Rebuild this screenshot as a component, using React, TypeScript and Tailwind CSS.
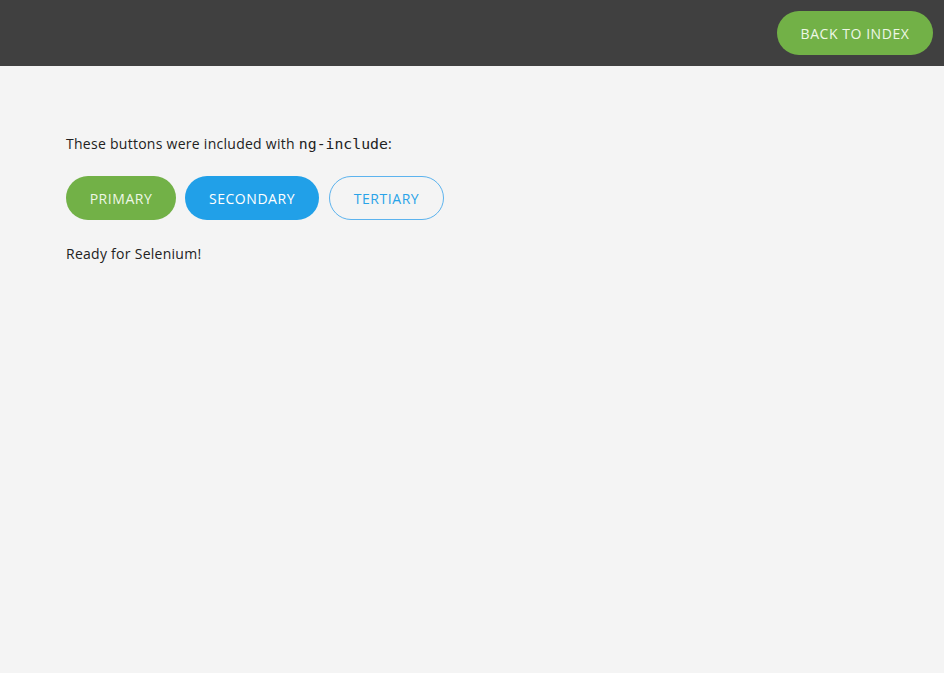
import React from 'react';

const font = { fontFamily: '"Open Sans", "Noto Sans", sans-serif' };

export default function App() {
  return (
    <div className="flex h-[673px] w-[944px] flex-col bg-[#f4f4f4] text-[14px] text-[#222]" style={font}>
      <header className="flex h-[66px] shrink-0 items-start justify-end bg-[#404040] pr-[11px] pt-[11px]">
        <button className="h-[44px] w-[156px] rounded-full bg-[#72b147] text-[14px] uppercase tracking-[0.55px] text-[#eef7e6]">
          Back to index
        </button>
      </header>

      <main className="flex-1 overflow-y-scroll [&::-webkit-scrollbar]:w-[17px] [&::-webkit-scrollbar-track]:border-l [&::-webkit-scrollbar-track]:border-[#e8e8e8] [&::-webkit-scrollbar-track]:bg-[#f0f0f0]">
        <div className="px-[66px] pt-[68px]">
          <p className="leading-[20px] tracking-[0.27px]">
            These buttons were included with{' '}
            <code className="font-['DejaVu_Sans_Mono',monospace] text-[14.8px] tracking-normal">ng-include</code>:
          </p>

          <div className="mt-[22px] flex gap-[9px]">
            <button className="h-[44px] w-[110px] rounded-full bg-[#72b147] text-[14px] tracking-[0.55px] text-[#eef7e6]">
              PRIMARY
            </button>
            <button className="h-[44px] w-[134px] rounded-full bg-[#21a0e8] text-[14px] tracking-[0.55px] text-white">
              SECONDARY
            </button>
            <button className="ml-px h-[44px] w-[115px] rounded-full border border-[#5cb3ee] text-[14px] tracking-[0.55px] text-[#2aa3e8]">
              TERTIARY
            </button>
          </div>

          <p className="mt-[24px] leading-[20px] tracking-[0.27px]">Ready for Selenium!</p>
        </div>
      </main>
    </div>
  );
}
